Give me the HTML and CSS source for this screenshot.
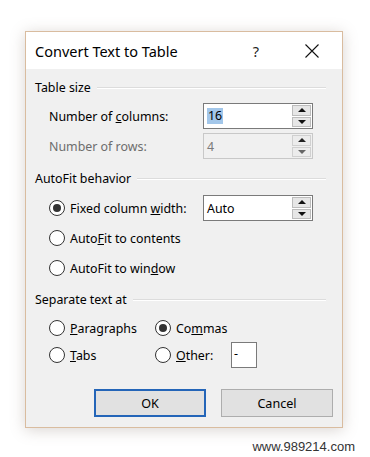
FILE: index.html
```html
<!DOCTYPE html>
<html>
<head>
<meta charset="utf-8">
<link rel="stylesheet" href="styles.css">
</head>
<body>
<div class="dialog">
  <div class="titlebar">
    <span class="title">Convert Text to Table</span>
    <span class="help">?</span>
    <svg class="close" width="14" height="14" viewBox="0 0 14 14"><path d="M0.5 0.5 L13.5 13.5 M13.5 0.5 L0.5 13.5" stroke="#111" stroke-width="1.1" fill="none"/></svg>
  </div>
  <div class="content">
    <div class="heading h1"><span>Table size</span><i class="rule"></i></div>
    <div class="row r-cols">
      <span class="label">Number of <u>c</u>olumns:</span>
      <div class="spin">
        <div class="field"><span class="sel">16</span></div>
        <div class="arrows"><b class="up"></b><b class="down"></b></div>
      </div>
    </div>
    <div class="row r-rows disabled">
      <span class="label">Number of rows:</span>
      <div class="spin">
        <div class="field">4</div>
        <div class="arrows"><b class="up"></b><b class="down"></b></div>
      </div>
    </div>

    <div class="heading h2"><span>AutoFit behavior</span><i class="rule"></i></div>
    <div class="row r-fixed">
      <span class="opt"><i class="radio on"></i><span>Fixed column <u>w</u>idth:</span></span>
      <div class="spin">
        <div class="field">Auto</div>
        <div class="arrows"><b class="up"></b><b class="down"></b></div>
      </div>
    </div>
    <div class="row r-opt"><span class="opt"><i class="radio"></i><span>Auto<u>F</u>it to contents</span></span></div>
    <div class="row r-opt"><span class="opt"><i class="radio"></i><span>AutoFit to win<u>d</u>ow</span></span></div>

    <div class="heading h3"><span>Separate text at</span><i class="rule"></i></div>
    <div class="grid">
      <span class="opt"><i class="radio"></i><span><u>P</u>aragraphs</span></span>
      <span class="opt"><i class="radio on"></i><span>Co<u>m</u>mas</span></span>
      <span class="opt"><i class="radio"></i><span><u>T</u>abs</span></span>
      <span class="opt other"><i class="radio"></i><span class="otxt"><u>O</u>ther:</span><span class="small-field">-</span></span>
    </div>

    <div class="buttons">
      <button class="btn ok">OK</button>
      <button class="btn">Cancel</button>
    </div>
  </div>
</div>
<div class="watermark">www.989214.com</div>
</body>
</html>
```
FILE: styles.css
```css
* { box-sizing: border-box; }
html, body { margin: 0; padding: 0; background: #fff; }
body {
  width: 370px;
  height: 457px;
  overflow: hidden;
  padding-top: 31px;
  font-family: "Noto Sans", "Open Sans", sans-serif;
  color: #000;
}
.dialog {
  margin-left: 25px;
  width: 318px;
  border: 1px solid #d9bc9f;
  box-shadow: 0 2px 14px rgba(120, 100, 90, 0.28);
  background: #f0f0f0;
}
.titlebar {
  height: 37px;
  background: #fff;
  display: flex;
  align-items: center;
  padding-left: 9px;
  padding-right: 23px;
}
.title { font-size: 14.5px; flex: 1; }
.help { font-size: 14.5px; margin-right: 46px; color: #222; }
.close { display: block; }

.content { padding: 8px 9px 10px 9px; font-size: 12.4px; }

.heading {
  display: flex;
  align-items: center;
  height: 20px;
}
.heading span { white-space: nowrap; padding-right: 6px; }
.heading .rule {
  flex: 1;
  height: 2px;
  border-top: 1px solid #dcdcdc;
  border-bottom: 1px solid #fff;
  margin-top: 1px;
  margin-right: 7px;
}
.h2 { margin-top: 9px; }
.h3 { margin-top: 8px; }

.row {
  display: flex;
  align-items: center;
  height: 26px;
  padding-left: 14px;
}
.r-cols { margin-top: 6px; }
.r-rows { margin-top: 4px; }
.r-fixed { margin-top: 7px; }
.r-opt { margin-top: 4px; }
.label { width: 154px; }
.disabled .label { color: #6d6d6d; }

.spin {
  display: flex;
  width: 110px;
  height: 26px;
  border: 1px solid #7a7a7a;
  background: #fff;
}
.disabled .spin { border-color: #c8c8c8; background: #f0f0f0; }
.field {
  flex: 1;
  display: flex;
  align-items: center;
  padding-left: 3px;
}
.disabled .field { color: #7a7a7a; }
.sel { background: #a3c7ea; padding: 0 1px; line-height: 16px; }
.arrows {
  width: 20px;
  display: flex;
  flex-direction: column;
  padding: 1px 1px 1px 0;
  gap: 1px;
}
.arrows b {
  flex: 1;
  background: #e6e6e6;
  border: 1px solid #bcbcbc;
  position: relative;
}
.arrows b::after {
  content: "";
  position: absolute;
  left: 50%;
  top: 50%;
  margin-left: -4px;
  border-left: 4px solid transparent;
  border-right: 4px solid transparent;
}
.arrows .up::after { margin-top: -2px; border-bottom: 4px solid #111; }
.arrows .down::after { margin-top: -2px; border-top: 4px solid #111; }
.disabled .arrows b { background: #ececec; border-color: #d0d0d0; }
.disabled .arrows b::after { border-bottom-color: #222; border-top-color: #666; }

.opt {
  display: flex;
  align-items: center;
  white-space: nowrap;
}
.r-fixed .opt { width: 154px; }
.radio {
  width: 16px;
  height: 16px;
  border-radius: 50%;
  border: 1px solid #333;
  background: #fff;
  margin-right: 5px;
  display: flex;
  align-items: center;
  justify-content: center;
  flex: none;
}
.radio.on::after {
  content: "";
  width: 8px;
  height: 8px;
  border-radius: 50%;
  background: #333;
}

.grid {
  display: grid;
  grid-template-columns: 106px auto;
  grid-auto-rows: 26px;
  row-gap: 1px;
  padding-left: 14px;
  margin-top: 6px;
  align-items: center;
}
.otxt { width: 55px; }
.small-field {
  width: 26px;
  height: 26px;
  border: 1px solid #7a7a7a;
  background: #fff;
  padding-left: 2px;
  line-height: 22px;
}

.buttons {
  display: flex;
  justify-content: flex-end;
  gap: 15px;
  margin-top: 21px;
}
.btn {
  width: 112px;
  height: 28px;
  font-family: "Noto Sans", "Open Sans", sans-serif;
  font-size: 12.6px;
  color: #000;
  background: #e1e1e1;
  border: 1px solid #adadad;
  padding: 0;
}
.btn.ok { border: 2px solid #2465b8; }

.watermark {
  text-align: right;
  padding-right: 15px;
  margin-top: 11px;
  font-family: "Liberation Sans", Arial, sans-serif;
  font-size: 13px;
  color: #333;
}
```
